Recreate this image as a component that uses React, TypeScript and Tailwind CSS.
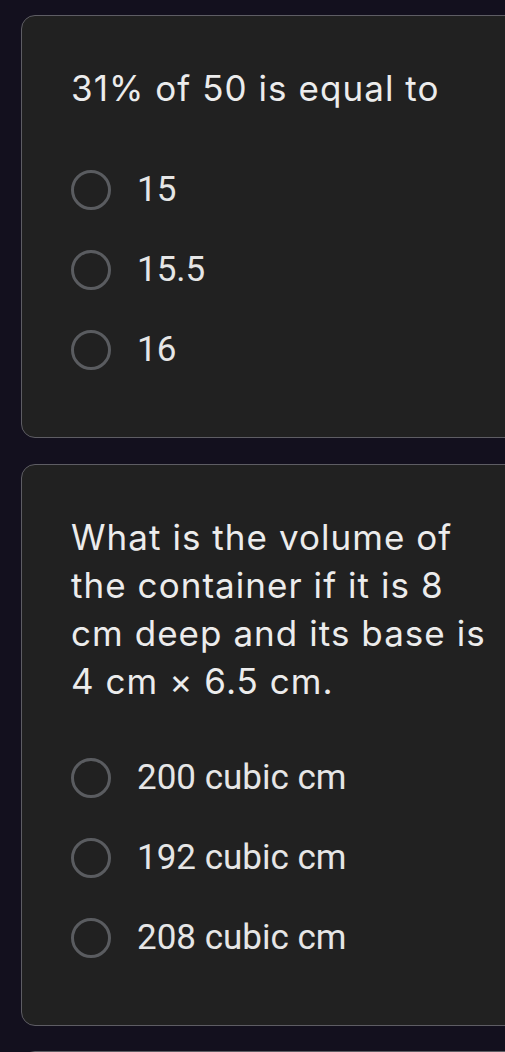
import React from 'react';

type Question = {
  title: string;
  options: string[];
  spacing: string;
};

const questions: Question[] = [
  { title: '31% of 50 is equal to', options: ['15', '15.5', '16'], spacing: 'mt-[38px]' },
  {
    title: 'What is the volume of the container if it is 8 cm deep and its base is 4 cm × 6.5 cm.',
    options: ['200 cubic cm', '192 cubic cm', '208 cubic cm'],
    spacing: 'mt-[33px]',
  },
];

const RadioOption: React.FC<{ label: string }> = ({ label }) => (
  <div className="flex items-center h-[80px]">
    <div className="w-[40px] h-[40px] rounded-full border-[3.5px] border-[#5a5c60] shrink-0" />
    <span className="ml-[26px] text-[35px] text-[#e6e6e6] font-['Roboto',sans-serif]">{label}</span>
  </div>
);

const QuestionCard: React.FC<{ q: Question }> = ({ q }) => (
  <div className="w-[540px] rounded-[14px] border-[1.5px] border-[#5e5d64] bg-[#212121] pl-[49px] pr-[57px] pt-[48px] pb-[47px]">
    <div className="text-[35px] leading-[48px] tracking-[0.03em] text-[#ececec] font-['Inter',sans-serif]">{q.title}</div>
    <div className={`${q.spacing} flex flex-col`}>
      {q.options.map((o) => (
        <RadioOption key={o} label={o} />
      ))}
    </div>
  </div>
);

export default function App() {
  return (
    <div className="h-screen overflow-hidden bg-[#13101e] pt-[15px] pl-[21px]">
      <div className="flex flex-col">
        <QuestionCard q={questions[0]} />
        <div className="h-[26px] shrink-0" />
        <QuestionCard q={questions[1]} />
        <div className="h-[25px] shrink-0" />
        <div className="w-[540px] h-[200px] shrink-0 rounded-[14px] border-[1.5px] border-[#5e5d64] bg-[#212121]" />
      </div>
    </div>
  );
}
